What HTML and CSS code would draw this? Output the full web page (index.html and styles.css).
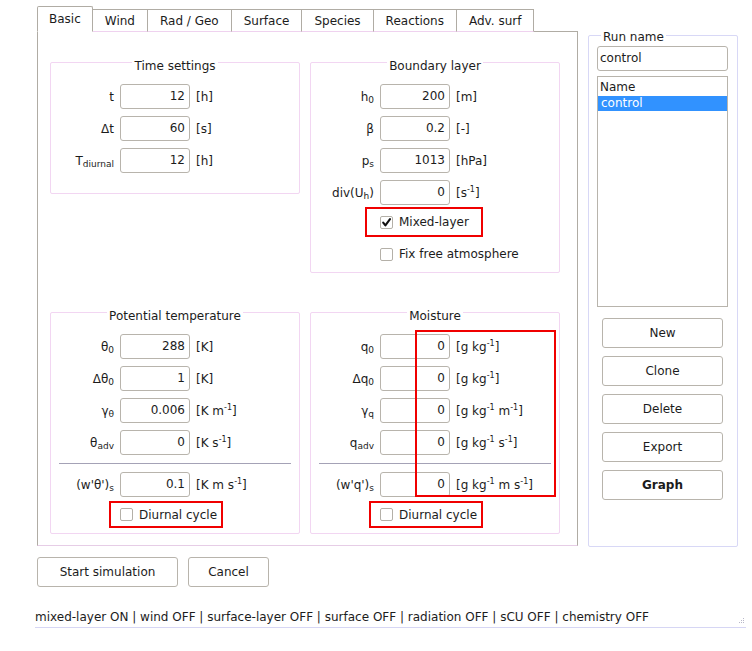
FILE: index.html
```
<!DOCTYPE html>
<html>
<head>
<meta charset="utf-8">
<link rel="stylesheet" href="styles.css">
</head>
<body>
<div class="app">
  <div class="top">
    <div class="left">
      <div class="tabs">
        <div class="tab active">Basic</div>
        <div class="tab">Wind</div>
        <div class="tab">Rad / Geo</div>
        <div class="tab">Surface</div>
        <div class="tab">Species</div>
        <div class="tab">Reactions</div>
        <div class="tab">Adv. surf</div>
      </div>
      <div class="panel">
        <div class="grid">
          <div class="group g-time">
            <div class="gtitle"><span>Time settings</span></div>
            <div class="fields">
              <div class="field"><span class="lbl">t</span><span class="inp">12</span><span class="unit">[h]</span></div>
              <div class="field"><span class="lbl">Δt</span><span class="inp">60</span><span class="unit">[s]</span></div>
              <div class="field"><span class="lbl">T<sub>diurnal</sub></span><span class="inp">12</span><span class="unit">[h]</span></div>
            </div>
          </div>
          <div class="group g-bl">
            <div class="gtitle"><span>Boundary layer</span></div>
            <div class="fields">
              <div class="field"><span class="lbl">h<sub>0</sub></span><span class="inp">200</span><span class="unit">[m]</span></div>
              <div class="field"><span class="lbl">β</span><span class="inp">0.2</span><span class="unit">[-]</span></div>
              <div class="field"><span class="lbl">p<sub>s</sub></span><span class="inp">1013</span><span class="unit">[hPa]</span></div>
              <div class="field"><span class="lbl">div(U<sub>h</sub>)</span><span class="inp">0</span><span class="unit">[s<sup>-1</sup>]</span></div>
            </div>
            <div class="cbline mixed">
              <span class="hl hl-mixed">
                <span class="cb"><svg width="13" height="13" viewBox="0 0 13 13"><path d="M3.2 6.6 L5.4 9.4 L10 3.2" fill="none" stroke="#111" stroke-width="2.1" stroke-linecap="round" stroke-linejoin="round"/></svg></span>
                <span>Mixed-layer</span>
              </span>
            </div>
            <div class="cbline plain">
              <span class="cb"></span><span>Fix free atmosphere</span>
            </div>
          </div>
          <div class="group g-pot">
            <div class="gtitle"><span>Potential temperature</span></div>
            <div class="fields">
              <div class="field"><span class="lbl">θ<sub>0</sub></span><span class="inp">288</span><span class="unit">[K]</span></div>
              <div class="field"><span class="lbl">Δθ<sub>0</sub></span><span class="inp">1</span><span class="unit">[K]</span></div>
              <div class="field"><span class="lbl">γ<sub>θ</sub></span><span class="inp">0.006</span><span class="unit">[K m<sup>-1</sup>]</span></div>
              <div class="field"><span class="lbl">θ<sub>adv</sub></span><span class="inp">0</span><span class="unit">[K s<sup>-1</sup>]</span></div>
              <div class="sep"></div>
              <div class="field"><span class="lbl">(w'θ')<sub>s</sub></span><span class="inp">0.1</span><span class="unit">[K m s<sup>-1</sup>]</span></div>
            </div>
            <div class="cbline diurnal">
              <span class="hl hl-diurnal"><span class="cb"></span><span>Diurnal cycle</span></span>
            </div>
          </div>
          <div class="group g-moist">
            <div class="gtitle"><span>Moisture</span></div>
            <div class="fields">
              <div class="field"><span class="lbl">q<sub>0</sub></span><span class="inp">0</span><span class="unit">[g kg<sup>-1</sup>]</span></div>
              <div class="field"><span class="lbl">Δq<sub>0</sub></span><span class="inp">0</span><span class="unit">[g kg<sup>-1</sup>]</span></div>
              <div class="field"><span class="lbl">γ<sub>q</sub></span><span class="inp">0</span><span class="unit">[g kg<sup>-1</sup> m<sup>-1</sup>]</span></div>
              <div class="field"><span class="lbl">q<sub>adv</sub></span><span class="inp">0</span><span class="unit">[g kg<sup>-1</sup> s<sup>-1</sup>]</span></div>
              <div class="sep"></div>
              <div class="field"><span class="lbl">(w'q')<sub>s</sub></span><span class="inp">0</span><span class="unit">[g kg<sup>-1</sup> m s<sup>-1</sup>]</span></div>
            </div>
            <div class="cbline diurnal">
              <span class="hl hl-diurnal"><span class="cb"></span><span>Diurnal cycle</span></span>
            </div>
            <div class="annot"></div>
          </div>
        </div>
      </div>
    </div>
    <div class="runbox">
      <div class="rtitle"><span>Run name</span></div>
      <div class="rinput">control</div>
      <div class="rlist">
        <div class="rhead">Name</div>
        <div class="rrow sel">control</div>
      </div>
      <div class="rbtns">
        <button class="btn rbtn">New</button>
        <button class="btn rbtn">Clone</button>
        <button class="btn rbtn">Delete</button>
        <button class="btn rbtn">Export</button>
        <button class="btn rbtn bold">Graph</button>
      </div>
    </div>
  </div>
  <div class="actions">
    <button class="btn start">Start simulation</button>
    <button class="btn cancel">Cancel</button>
  </div>
  <div class="status">
    <span class="stext">mixed-layer ON | wind OFF | surface-layer OFF | surface OFF | radiation OFF | sCU OFF | chemistry OFF</span>
    <svg class="grip" width="6" height="6" viewBox="0 0 6 6"><rect x="4" y="0" width="1" height="1" fill="#b8b8c8"/><rect x="2" y="2" width="1" height="1" fill="#b8b8c8"/><rect x="4" y="2" width="1" height="1" fill="#b8b8c8"/><rect x="0" y="4" width="1" height="1" fill="#b8b8c8"/><rect x="2" y="4" width="1" height="1" fill="#b8b8c8"/><rect x="4" y="4" width="1" height="1" fill="#b8b8c8"/></svg>
  </div>
</div>
</body>
</html>
```
FILE: styles.css
```
* { box-sizing: border-box; }
html, body { margin: 0; padding: 0; background: #ffffff; }
body {
  font-family: "DejaVu Sans", "Liberation Sans", sans-serif;
  font-size: 12px;
  line-height: 14px;
  color: #1c1c1c;
}
.app { padding: 6px 0 0 35px; width: 752px; height: 651px; }
.top { display: flex; gap: 10px; margin-left: 2px; }
.left { width: 541px; }

/* tabs */
.tabs {
  display: flex;
  align-items: flex-end;
  height: 26px;
  margin-bottom: -1px;
  position: relative;
  z-index: 1;
}
.tab {
  height: 23px;
  padding: 0 12px;
  border-top: 1px solid #b0aca4;
  border-right: 1px solid #b0aca4;
  border-bottom: 1px solid #efd2ef;
  line-height: 22px;
  white-space: nowrap;
  background: #fff;
}
.tab.active {
  height: 26px;
  padding: 0 11px;
  border-left: 1px solid #b0aca4;
  border-bottom: 1px solid #ffffff;
  border-radius: 2px 2px 0 0;
  line-height: 24px;
}

/* panel */
.panel {
  height: 515px;
  border: 1px solid #b0aca4;
  border-bottom-color: #e6cde6;
  padding: 30px 0 0 12px;
}
.grid {
  display: grid;
  grid-template-columns: 250px 250px;
  column-gap: 10px;
  row-gap: 39px;
  align-items: start;
}
.group {
  position: relative;
  border: 1px solid #f2d6f2;
  border-radius: 2px;
}
.g-time { height: 132px; }
.g-bl { height: 211px; }
.g-pot, .g-moist { height: 222px; }

.gtitle { margin-top: -4px; height: 15px; text-align: center; }
.gtitle span { background: #fff; padding: 0 2px; }

.fields {
  display: flex;
  flex-direction: column;
  gap: 7px;
  margin-top: 10px;
}
.field {
  display: grid;
  grid-template-columns: 63px 70px auto;
  column-gap: 6px;
  align-items: center;
  height: 25px;
}
.lbl { text-align: right; white-space: nowrap; }
.inp {
  height: 25px;
  border: 1px solid #b8b4ac;
  border-radius: 3px;
  text-align: right;
  padding-right: 4px;
  line-height: 23px;
}
.unit { white-space: nowrap; }
sub { font-size: 9px; line-height: 0; vertical-align: -2px; }
sup { font-size: 8px; line-height: 0; vertical-align: 5px; }

.sep {
  height: 1px;
  background: #a4a2b6;
  margin: 1px 8px 1px 8px;
}

/* checkboxes */
.cbline { display: flex; align-items: center; }
.cb {
  width: 13px;
  height: 13px;
  border: 1px solid #b4b0a8;
  border-radius: 2px;
  display: inline-block;
  position: relative;
  flex: none;
  background: #fff;
}
.cb svg { position: absolute; left: -1px; top: -1px; }
.hl {
  display: inline-flex;
  align-items: center;
  gap: 6px;
  border: 2px solid #f00000;
}
.mixed { margin-top: 2px; margin-left: 54px; }
.hl-mixed { height: 30px; padding: 0 12px 0 13px; }
.plain { margin-top: 9px; margin-left: 69px; height: 16px; gap: 6px; }
.diurnal { margin-top: 4px; margin-left: 58px; }
.hl-diurnal { height: 27px; padding: 0 4px 0 9px; }

.annot {
  position: absolute;
  left: 104px;
  top: 17px;
  width: 141px;
  height: 167px;
  border: 2px solid #f00000;
}

/* run box */
.runbox {
  width: 150px;
  height: 512px;
  margin-top: 29px;
  border: 1px solid #d8d8f6;
  border-radius: 2px;
  padding: 0 9px 0 8px;
}
.rtitle { margin-top: -6px; height: 15px; }
.rtitle span { background: #fff; padding: 0 2px; margin-left: 4px; }
.rinput {
  margin-top: 1px;
  height: 25px;
  border: 1px solid #b8b4ac;
  border-radius: 3px;
  padding-left: 2px;
  line-height: 23px;
}
.rlist {
  margin-top: 5px;
  height: 231px;
  border: 1px solid #b8b4ac;
}
.rhead { height: 19px; line-height: 20px; padding-left: 2px; }
.rrow { height: 15px; line-height: 15px; padding-left: 3px; }
.rrow.sel { background: #3192ff; color: #ffffff; }

.rbtns {
  display: flex;
  flex-direction: column;
  align-items: center;
  gap: 8px;
  margin-top: 11px;
}
.btn {
  font-family: "DejaVu Sans", "Liberation Sans", sans-serif;
  font-size: 12px;
  color: #1c1c1c;
  background: #ffffff;
  border: 1px solid #b8b4ac;
  border-radius: 3px;
  height: 30px;
  padding: 0;
  margin: 0;
}
.rbtn { width: 121px; }
.bold { font-weight: bold; }

.actions { display: flex; gap: 10px; margin: 10px 0 0 2px; }
.start { width: 141px; }
.cancel { width: 81px; }

.status {
  display: flex;
  justify-content: space-between;
  align-items: center;
  width: 711px;
  height: 21px;
  margin-top: 20px;
  border-bottom: 1px solid #d6d6f4;
  white-space: nowrap;
  line-height: 18px;
}
.grip { margin-top: 8px; margin-right: 1px; }
```
